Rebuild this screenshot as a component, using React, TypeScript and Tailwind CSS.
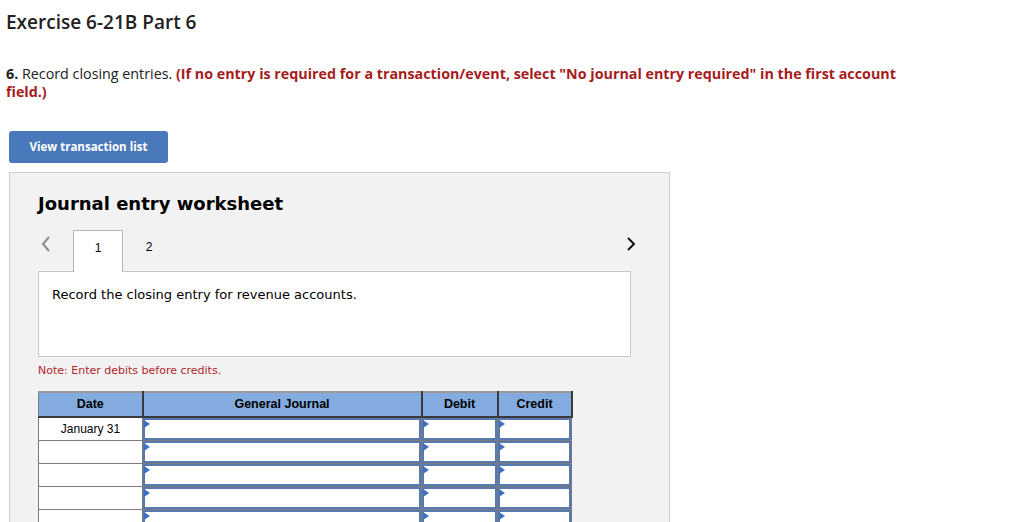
import React from "react";

const rows = ["January 31", "", "", "", "", ""];

function InputCell() {
  return (
    <td className="border border-[#7b7b7b] p-0">
      <div className="relative h-[22px] border-2 border-[#5779b0] bg-white">
        <span className="absolute -left-[1px] top-0 h-0 w-0 border-y-[4px] border-l-[6px] border-y-transparent border-l-[#3f6fc0]" />
      </div>
    </td>
  );
}

export default function App() {
  return (
    <div className="h-[522px] overflow-hidden bg-white text-[#222]" style={{ fontFamily: "'Open Sans', Lato, sans-serif" }}>
      <div className="px-[6px] pt-[9px]">
        <h1 className="text-[19px] font-semibold leading-[26px] text-[#222]">Exercise 6-21B Part 6</h1>
        <p className="mt-[30px] w-[915px] text-[14.3px] leading-[18px]">
          <b>6.</b> Record closing entries.{" "}
          <span className="font-bold text-[#a61c1c]">
            (If no entry is required for a transaction/event, select "No journal entry required" in the first account field.)
          </span>
        </p>
      </div>

      <div className="px-[9px]">
        <button
          type="button"
          className="mt-[30px] h-[32px] w-[159px] rounded-[3px] bg-[#4a79bb] text-[11.5px] font-bold text-white"
        >
          View transaction list
        </button>

        <div className="mt-[9px] h-[400px] w-[661px] border border-[#cfcfcf] bg-[#f2f2f2] pl-[28px] pr-[38px] pt-[20px]">
          <h2 className="text-[18px] font-bold leading-[22px] text-black" style={{ fontFamily: "'DejaVu Sans', Verdana, sans-serif" }}>
            Journal entry worksheet
          </h2>

          <div className="mt-[15px] flex h-[41px] items-center" style={{ fontFamily: "'Liberation Sans', Arial, sans-serif" }}>
            <svg width="12" height="18" viewBox="0 0 12 18" className="ml-[2px] mr-[21px] mt-[-14px]">
              <path d="M9 2 L3 9 L9 16" fill="none" stroke="#8a8a8a" strokeWidth="2" />
            </svg>
            <div className="relative z-10 mb-[-1px] flex h-[42px] w-[50px] justify-center self-start border border-b-0 border-[#b5b5b5] bg-white pt-[8px] text-[12px] text-black">
              1
            </div>
            <div className="flex h-[41px] w-[52px] justify-center self-start pt-[8px] text-[12px] text-black">2</div>
            <div className="flex-1" />
            <svg width="12" height="16" viewBox="0 0 12 16" className="mr-[-6px] mt-[-14px]">
              <path d="M3 2 L9 8 L3 14" fill="none" stroke="#111" strokeWidth="2" />
            </svg>
          </div>

          <div className="h-[86px] border border-[#c8c8c8] bg-white px-[13px] pt-[13px] text-[13px] text-black" style={{ fontFamily: "'DejaVu Sans', Verdana, sans-serif" }}>
            Record the closing entry for revenue accounts.
          </div>

          <p className="mt-[7px] text-[11px] leading-[14px] text-[#b0262a]" style={{ fontFamily: "'DejaVu Sans', Verdana, sans-serif" }}>
            Note: Enter debits before credits.
          </p>

          <table className="mt-[13px] border-collapse text-[12px] text-black" style={{ fontFamily: "'Liberation Sans', Arial, sans-serif" }}>
            <thead>
              <tr className="h-[25px] bg-[#84abdf] text-[12.5px] font-bold">
                <th className="w-[104px] border-t-2 border-r-2 border-b-2 border-l border-t-[#9a9a9a] border-r-[#3a3a3a] border-b-[#3a3a3a] border-l-[#7b7b7b]">Date</th>
                <th className="w-[279px] border-t-2 border-r-2 border-b-2 border-t-[#9a9a9a] border-r-[#3a3a3a] border-b-[#3a3a3a]">General Journal</th>
                <th className="w-[76px] border-t-2 border-r-2 border-b-2 border-t-[#9a9a9a] border-r-[#3a3a3a] border-b-[#3a3a3a]">Debit</th>
                <th className="w-[74px] border-t-2 border-r-2 border-b-2 border-t-[#9a9a9a] border-r-[#3a3a3a] border-b-[#3a3a3a]">Credit</th>
              </tr>
            </thead>
            <tbody>
              {rows.map((d, i) => (
                <tr key={i} className="h-[23px]">
                  <td className="border border-[#7b7b7b] bg-white text-center">{d}</td>
                  <InputCell />
                  <InputCell />
                  <InputCell />
                </tr>
              ))}
            </tbody>
          </table>
        </div>
      </div>
    </div>
  );
}
